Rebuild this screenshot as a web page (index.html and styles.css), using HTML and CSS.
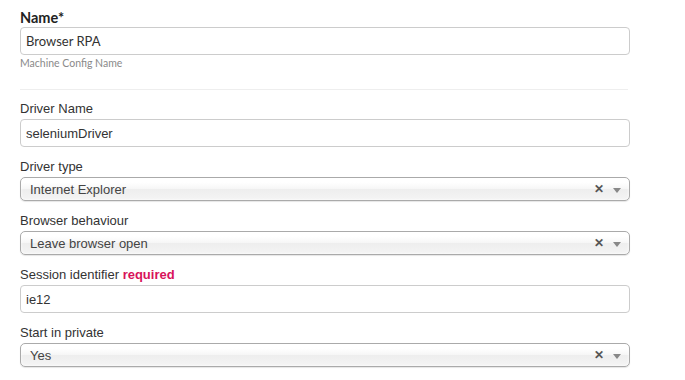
FILE: index.html
```html
<!DOCTYPE html>
<html lang="en">
<head>
  <meta charset="UTF-8">
  <title>Machine Config</title>
  <link rel="stylesheet" href="styles.css">
</head>
<body>

<form class="config-form">
  <div class="head-group">
    <label class="name-label">Name*</label>
    <input type="text" class="name-input" value="Browser RPA">
    <div class="help">Machine Config Name</div>
  </div>

  <hr class="divider">

  <div class="group">
    <label>Driver Name</label>
    <input type="text" class="field" value="seleniumDriver">
  </div>

  <div class="group">
    <label>Driver type</label>
    <div class="chosen">
      <span class="chosen-text">Internet Explorer</span>
      <span class="chosen-clear">&#x2715;</span>
      <span class="chosen-arrow"></span>
    </div>
  </div>

  <div class="group">
    <label>Browser behaviour</label>
    <div class="chosen">
      <span class="chosen-text">Leave browser open</span>
      <span class="chosen-clear">&#x2715;</span>
      <span class="chosen-arrow"></span>
    </div>
  </div>

  <div class="group">
    <label>Session identifier <span class="required">required</span></label>
    <input type="text" class="field" value="ie12">
  </div>

  <div class="group">
    <label>Start in private</label>
    <div class="chosen">
      <span class="chosen-text">Yes</span>
      <span class="chosen-clear">&#x2715;</span>
      <span class="chosen-arrow"></span>
    </div>
  </div>
</form>

</body>
</html>
```

FILE: styles.css
```css
body {
  margin: 0;
  background: #fff;
  color: #333;
  font-family: "Liberation Sans", Arial, sans-serif;
  font-size: 13px;
}
.config-form {
  width: 610px;
  padding: 10px 0 0 20px;
}
label {
  display: block;
  line-height: 20px;
  margin-bottom: 1px;
  padding-top: 1px;
  height: 20px;
  box-sizing: border-box;
}
.head-group label {
  font-family: Lato, "Open Sans", sans-serif;
  font-weight: bold;
  font-size: 14.5px;
  line-height: 16px;
  height: auto;
  padding-top: 0;
  color: #222;
}
.help {
  font-family: Lato, "Open Sans", sans-serif;
  font-size: 10.5px;
  line-height: 14px;
  color: #8a8a8a;
  margin-top: 1px;
}
.divider {
  border: 0;
  border-top: 1px solid #eee;
  margin: 19px 2px 8px 0;
}
.group { margin-bottom: 9px; }
input[type=text] {
  display: block;
  box-sizing: border-box;
  width: 610px;
  height: 28px;
  margin: 0;
  padding: 0 5px;
  border: 1px solid #ccc;
  border-radius: 4px;
  color: #333;
  font-family: "Liberation Sans", Arial, sans-serif;
  font-size: 13px;
  background: #fff;
}
.head-group input[type=text] {
  font-family: Lato, "Open Sans", sans-serif;
  font-size: 13px;
  color: #333;
}
.required {
  color: #d8135a;
  font-weight: bold;
}
.chosen {
  box-sizing: border-box;
  display: flex;
  align-items: center;
  width: 610px;
  height: 24px;
  padding: 0 8px 0 9px;
  border: 1px solid #aaa;
  border-radius: 5px;
  background: linear-gradient(#fff 20%, #f6f6f6 50%, #eee 52%, #f4f4f4 100%);
  box-shadow: inset 0 0 3px #fff, 0 1px 1px rgba(0,0,0,0.1);
  color: #444;
}
.chosen-text { flex: 1; }
.chosen-clear {
  font-size: 12px;
  font-weight: bold;
  color: #555;
  margin-right: 9px;
}
.chosen-arrow {
  width: 0;
  height: 0;
  border-left: 4px solid transparent;
  border-right: 4px solid transparent;
  border-top: 5px solid #888;
  margin-top: 2px;
}
```
